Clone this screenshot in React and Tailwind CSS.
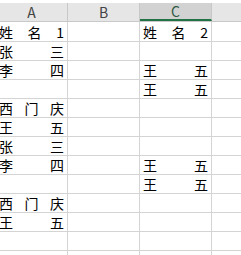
const font = { fontFamily: '"Noto Sans CJK SC", "Noto Sans", sans-serif' };

const rows = [
  [["姓", "名", "1"], null, ["姓", "名", "2"]],
  [["张", "三"], null, null],
  [["李", "四"], null, ["王", "五"]],
  [null, null, ["王", "五"]],
  [["西", "门", "庆"], null, null],
  [["王", "五"], null, null],
  [["张", "三"], null, null],
  [["李", "四"], null, ["王", "五"]],
  [null, null, ["王", "五"]],
  [["西", "门", "庆"], null, null],
  [["王", "五"], null, null],
  [null, null, null],
  [null, null, null],
];

function Cell({ parts, first }) {
  return (
    <div
      className={`w-[72px] shrink-0 border-r border-b border-[#d4d4d4] flex items-center justify-between px-[3px] text-[14px] text-black ${
        first ? "h-[20px]" : "h-[19px]"
      }`}
    >
      {parts && parts.map((p, i) => <span key={i} className="leading-none">{p}</span>)}
    </div>
  );
}

export default function App() {
  return (
    <div className="w-[241px] h-[255px] overflow-hidden bg-white" style={font}>
      <div className="h-[3px] bg-white" />
      <div className="-ml-[4px]">
        <div className="flex h-[19px] bg-[#e6e6e6] border-b border-[#c8c8c8] text-[14px] text-[#444]">
          <div className="w-[72px] shrink-0 border-r border-[#c8c8c8] flex items-center justify-center">A</div>
          <div className="w-[72px] shrink-0 border-r border-[#c8c8c8] flex items-center justify-center">B</div>
          <div className="w-[72px] shrink-0 border-r border-[#c8c8c8] bg-[#d2d2d2] border-b-2 border-b-[#217346] flex items-center justify-center text-[#2f5a44]">C</div>
          <div className="w-[72px] shrink-0" />
        </div>
        {rows.map((r, i) => (
          <div key={i} className="flex">
            <Cell parts={r[0]} first={i === 0} />
            <Cell parts={r[1]} first={i === 0} />
            <Cell parts={r[2]} first={i === 0} />
            <Cell parts={null} first={i === 0} />
          </div>
        ))}
      </div>
    </div>
  );
}
